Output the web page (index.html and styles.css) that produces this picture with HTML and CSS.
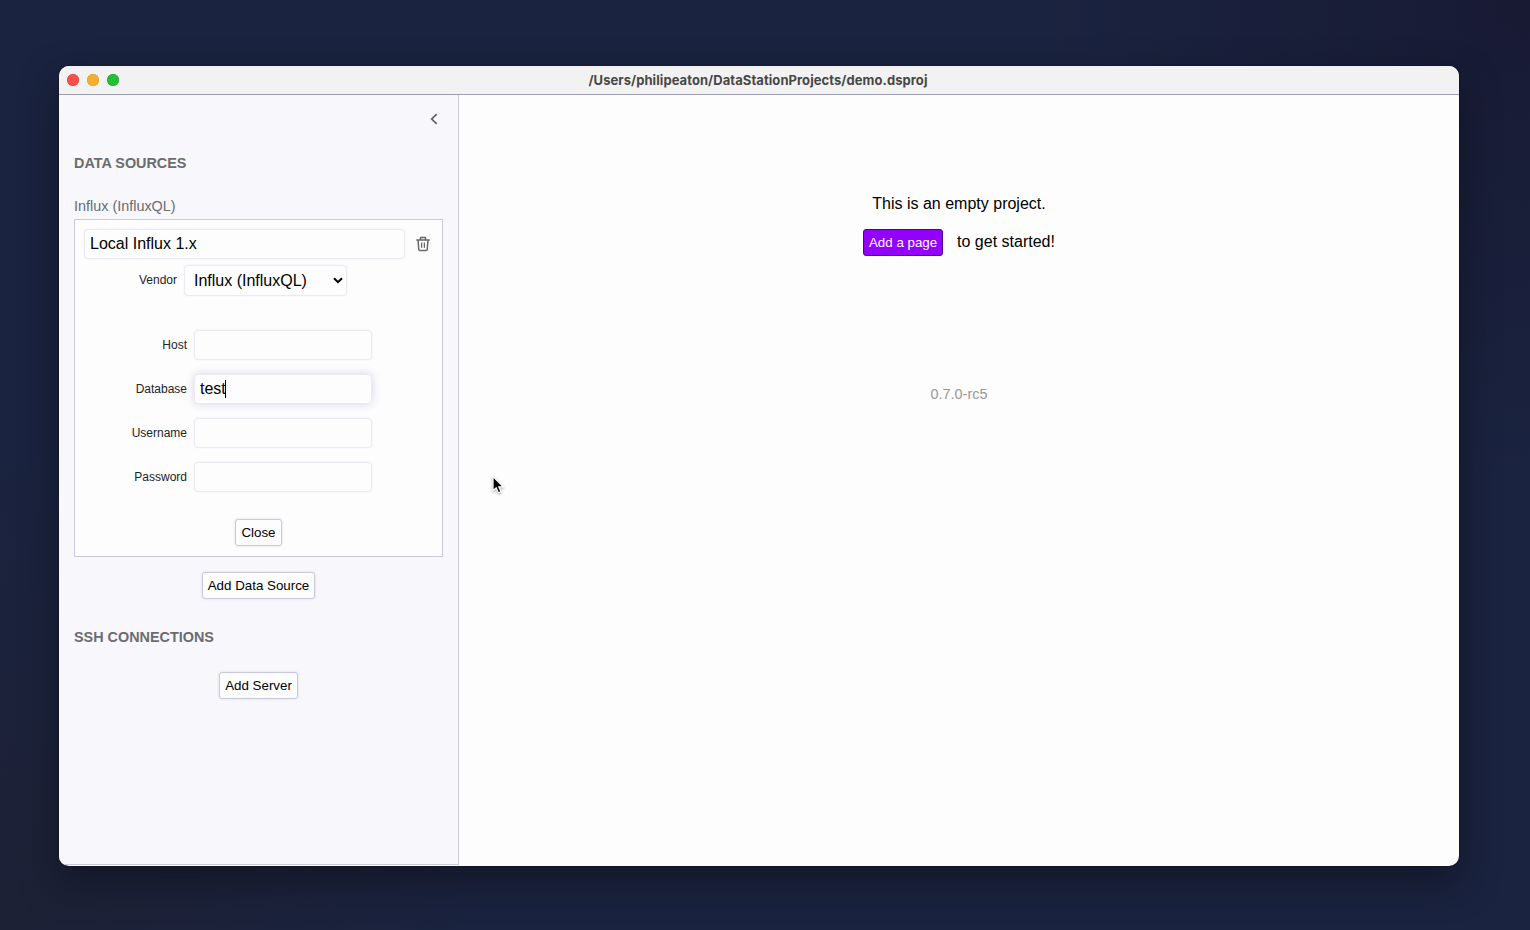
FILE: index.html
```html
<!DOCTYPE html>
<html lang="en">
<head>
<meta charset="utf-8">
<title>DataStation</title>
<link rel="stylesheet" href="styles.css">
</head>
<body>
<div class="window">
  <header class="titlebar">
    <div class="lights"><i class="light red"></i><i class="light amber"></i><i class="light green"></i></div>
    <span class="title">/Users/philipeaton/DataStationProjects/demo.dsproj</span>
  </header>
  <div class="content">
    <aside class="sidebar">
      <div class="collapse">
        <svg width="8" height="12" viewBox="0 0 8 12"><path d="M6.7 1.2 1.7 6l5 4.8" fill="none" stroke="#606060" stroke-width="1.7"/></svg>
      </div>
      <h2 class="heading sources">Data Sources</h2>
      <div class="kind">Influx (InfluxQL)</div>
      <section class="panel">
        <div class="name-row">
          <input class="field name" value="Local Influx 1.x">
          <svg class="trash" width="14" height="16" viewBox="0 0 14 16" fill="none" stroke="#686868" stroke-width="1.5" stroke-linejoin="round"><path d="M.3 4h13.4M4.5 4V1.5h5V4M2 4l.8 9.5q.1.9 1 .9h6.4q.9 0 1-.9L12 4"/><path d="M5.6 6.5v5.3M8.4 6.5v5.3" stroke-width="1.3"/></svg>
        </div>
        <div class="vendor-row">
          <label class="label">Vendor</label>
          <div class="field select"><span>Influx (InfluxQL)</span>
            <svg width="10" height="7" viewBox="0 0 10 7"><path d="m1 1.2 4 4 4-4" fill="none" stroke="#000" stroke-width="2"/></svg>
          </div>
        </div>
        <div class="form">
          <div class="row"><label class="label">Host</label><div class="field"></div></div>
          <div class="row"><label class="label">Database</label><div class="field focused"><span>test</span><i class="caret"></i></div></div>
          <div class="row"><label class="label">Username</label><div class="field"></div></div>
          <div class="row"><label class="label">Password</label><div class="field"></div></div>
        </div>
        <button class="button close">Close</button>
      </section>
      <button class="button add-source">Add Data Source</button>
      <h2 class="heading ssh">SSH Connections</h2>
      <button class="button add-server">Add Server</button>
    </aside>
    <main class="main">
      <p class="empty">This is an empty project.</p>
      <div class="start"><button class="button primary">Add a page</button><span>to get started!</span></div>
      <div class="version">0.7.0-rc5</div>
    </main>
  </div>
</div>
<svg class="cursor" width="16" height="22" viewBox="0 0 16 22"><path d="M2 1.5v14.3l3.2-3 2.2 5 2.6-1.1-2.2-4.9h4.4z" fill="#000" stroke="#fff" stroke-width="1.2"/></svg>
</body>
</html>
```
FILE: styles.css
```css
* { box-sizing: border-box; }
body {
  margin: 0;
  height: 930px;
  padding: 66px 71px 64px 59px;
  overflow: hidden;
  font-family: "Liberation Sans", Arial, sans-serif;
  font-size: 16px;
  color: #000;
  background:
    radial-gradient(circle at 100% 0, #181a34 0, rgba(24, 26, 52, 0) 480px),
    radial-gradient(circle at 0 100%, #1d2136 0, rgba(29, 33, 54, 0) 480px),
    #1a233f;
}
.window {
  width: 1400px;
  height: 800px;
  display: flex;
  flex-direction: column;
  overflow: hidden;
  border-radius: 10px;
  background: #fdfdfe;
  box-shadow: 0 16px 36px rgba(12, 15, 24, .55), 0 0 2px rgba(0, 0, 0, .6);
}
.titlebar {
  flex: none;
  height: 29px;
  display: grid;
  grid-template-columns: 100px 1fr 102px;
  align-items: center;
  background: #f2f2f2;
  border-bottom: 1px solid #9d9db3;
}
.lights { display: flex; gap: 8px; padding-left: 8px; }
.light { width: 12px; height: 12px; border-radius: 50%; }
.red { background: #fc4f49; box-shadow: inset 0 0 0 .5px #c94540; }
.amber { background: #f6ae2d; box-shadow: inset 0 0 0 .5px #d0982f; }
.green { background: #23c035; box-shadow: inset 0 0 0 .5px #259b35; }
.title {
  padding-bottom: 1px;
  text-align: center;
  font: 700 13px/16px Inter, sans-serif;
  letter-spacing: .07px;
  color: #474747;
}
.content { flex: 1; display: flex; align-items: flex-start; }
.sidebar {
  width: 400px;
  height: 770px;
  padding: 0 15px;
  display: flex;
  flex-direction: column;
  background: #f7f7fc;
  border-right: 1px solid #c9c8dc;
  border-bottom: 1px solid #c9c8dc;
}
.collapse { height: 12px; margin-top: 18px; padding-right: 5px; display: flex; justify-content: flex-end; }
.heading {
  margin: 0;
  font-size: 14.4px;
  line-height: 18px;
  text-transform: uppercase;
  color: #6c6c6e;
}
.sources { margin-top: 29px; }
.kind { margin-top: 25px; height: 22px; font-size: 14.4px; line-height: 18px; color: #6c6c6e; }
.panel {
  height: 338px;
  padding: 9px;
  display: flex;
  flex-direction: column;
  background: #fdfdfe;
  border: 1px solid #c9c8dc;
}
.name-row { display: flex; align-items: center; gap: 11px; }
.field {
  width: 178px;
  height: 30px;
  padding: 0 5px;
  display: flex;
  align-items: center;
  font: 16px/20px "Liberation Sans", Arial, sans-serif;
  color: #000;
  background: #fdfdfe;
  border: 1px solid #ebeaf1;
  border-radius: 4px;
  box-shadow: 0 0 2px #efeef5;
  outline: 0;
}
.name { width: 321px; }
.vendor-row { display: flex; align-items: center; margin-top: 6px; padding-left: 20px; }
.vendor-row .label { width: 73px; padding-bottom: 2px; }
.select { width: 163px; height: 31px; justify-content: space-between; padding: 0 3px 0 9px; margin-left: 7px; }
.label { width: 103px; text-align: right; font-size: 12px; line-height: 16px; color: #232325; }
.form { display: flex; flex-direction: column; gap: 14px; margin-top: 34px; }
.row { display: flex; align-items: center; gap: 7px; }
.focused { box-shadow: 0 0 10px #d7d5e4; }
.caret { width: 1px; height: 18px; margin-left: -1px; background: #000; }
.button {
  height: 27px;
  padding: 0;
  align-self: center;
  font: 13.333px/16px "Liberation Sans", Arial, sans-serif;
  color: #000;
  background: #fdfdfe;
  border: 1px solid #c9c8dc;
  border-radius: 3px;
  box-shadow: 0 0 3px #dddcec;
}
.close { width: 47px; margin-top: 27px; }
.add-source { width: 113px; margin-top: 15px; }
.ssh { margin-top: 29px; }
.add-server { width: 79px; margin-top: 26px; }
.main { flex: 1; display: flex; flex-direction: column; align-items: center; }
.empty { margin: 98px 0 0; line-height: 22px; }
.start { display: flex; align-items: center; gap: 14px; margin-top: 14px; height: 27px; }
.start span { padding-bottom: 2px; }
.primary { width: 80px; color: #fff; background: #9300fb; border-color: #4a0784; box-shadow: none; }
.version { margin-top: 129px; font-size: 14.4px; line-height: 18px; color: #98989a; }
.cursor { position: absolute; left: 491px; top: 475px; filter: drop-shadow(0 1px 1px rgba(0, 0, 0, .35)); }
```
